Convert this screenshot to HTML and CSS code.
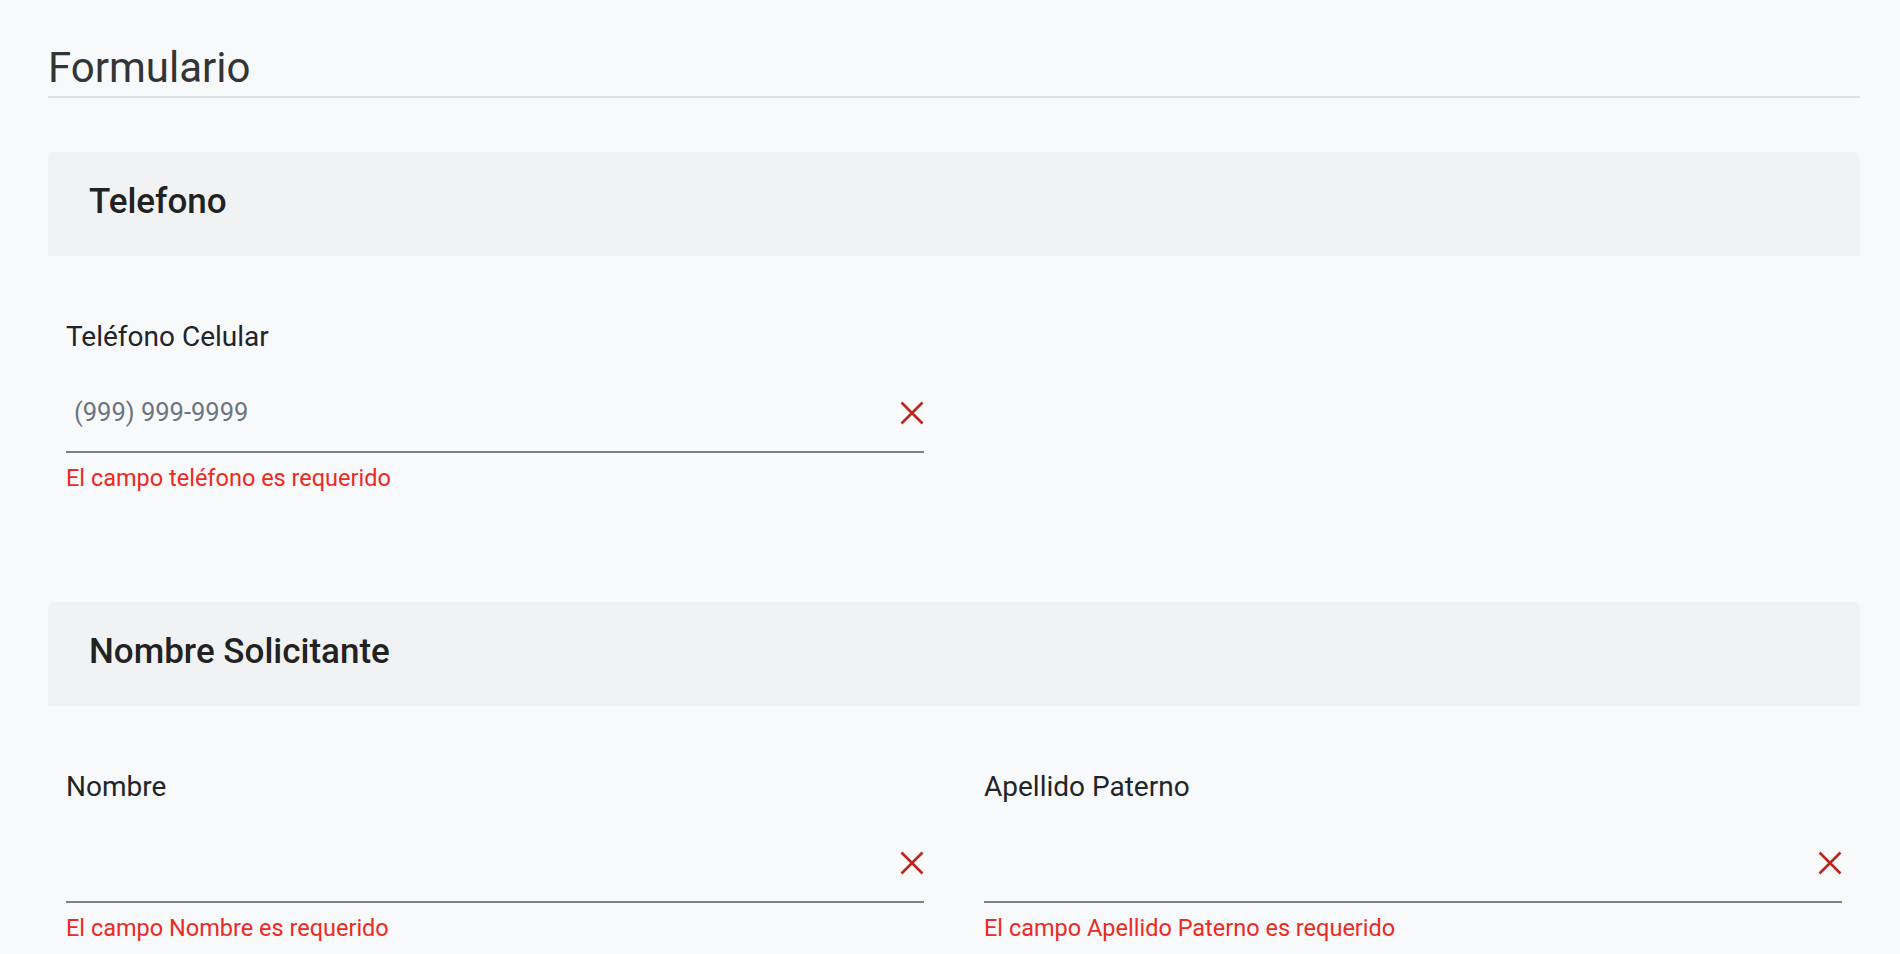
FILE: index.html
```html
<!DOCTYPE html>
<html lang="es">
<head>
<meta charset="utf-8">
<title>Formulario</title>
<link rel="stylesheet" href="styles.css">
</head>
<body>
<main class="page">
  <h1 class="page-title">Formulario</h1>

  <section class="group">
    <h2 class="group-head">Telefono</h2>
    <div class="fields">
      <div class="field">
        <label class="field-label" for="cel">Teléfono Celular</label>
        <div class="control">
          <input id="cel" class="control-input" type="text" placeholder="(999) 999-9999">
          <span class="control-icon" aria-hidden="true">
            <svg viewBox="0 0 24 24" width="24" height="24"><path d="M1.5 1.5 L22.5 22.5 M22.5 1.5 L1.5 22.5" stroke="currentColor" stroke-width="2.6" fill="none"/></svg>
          </span>
        </div>
        <p class="field-error">El campo teléfono es requerido</p>
      </div>
    </div>
  </section>

  <section class="group group-next">
    <h2 class="group-head">Nombre Solicitante</h2>
    <div class="fields">
      <div class="field">
        <label class="field-label" for="nombre">Nombre</label>
        <div class="control">
          <input id="nombre" class="control-input" type="text">
          <span class="control-icon" aria-hidden="true">
            <svg viewBox="0 0 24 24" width="24" height="24"><path d="M1.5 1.5 L22.5 22.5 M22.5 1.5 L1.5 22.5" stroke="currentColor" stroke-width="2.6" fill="none"/></svg>
          </span>
        </div>
        <p class="field-error">El campo Nombre es requerido</p>
      </div>
      <div class="field">
        <label class="field-label" for="paterno">Apellido Paterno</label>
        <div class="control">
          <input id="paterno" class="control-input" type="text">
          <span class="control-icon" aria-hidden="true">
            <svg viewBox="0 0 24 24" width="24" height="24"><path d="M1.5 1.5 L22.5 22.5 M22.5 1.5 L1.5 22.5" stroke="currentColor" stroke-width="2.6" fill="none"/></svg>
          </span>
        </div>
        <p class="field-error">El campo Apellido Paterno es requerido</p>
      </div>
    </div>
  </section>
</main>
</body>
</html>
```

FILE: styles.css
```css
* {
  box-sizing: border-box;
}

html, body {
  margin: 0;
  padding: 0;
  background: #f8f9fb;
}

body {
  font-family: Roboto, "Liberation Sans", sans-serif;
  color: #212529;
  overflow: hidden;
}

.page {
  padding: 44px 40px 0 48px;
}

.page-title {
  margin: 0;
  font-size: 42px;
  line-height: 48px;
  font-weight: 400;
  color: #343434;
  padding-bottom: 4px;
  border-bottom: 2px solid #dfe0e7;
}

.group {
  margin-top: 54px;
}

.group-next {
  margin-top: 110px;
}

.group-head {
  margin: 0;
  height: 104px;
  padding: 30px 41px 34px;
  font-size: 35px;
  line-height: 40px;
  font-weight: 500;
  color: #222222;
  background: #f1f2f4;
  border-radius: 6px 6px 0 0;
}

.fields {
  display: grid;
  grid-template-columns: 1fr 1fr;
  column-gap: 60px;
  padding: 0 18px;
  margin-top: 65px;
}

.field {
  min-width: 0;
}

.field-label {
  display: block;
  font-size: 28px;
  line-height: 31px;
  color: #212529;
  margin-bottom: 20px;
}

.control {
  position: relative;
}

.control-input {
  display: block;
  width: 100%;
  height: 81px;
  margin: 0;
  padding: 0 44px 0 8px;
  border: 0;
  border-bottom: 2px solid #808080;
  background: transparent;
  font-family: Roboto, "Liberation Sans", sans-serif;
  font-size: 25.5px;
  color: #212529;
  outline: none;
}

.control-input::placeholder {
  color: #6c757d;
  opacity: 1;
}

.control-icon {
  position: absolute;
  right: 0;
  top: 29px;
  width: 24px;
  height: 24px;
  color: #b8261c;
  display: flex;
}

.field-error {
  margin: 11px 0 0;
  font-size: 23.5px;
  line-height: 28px;
  color: #ec2a22;
}
```
